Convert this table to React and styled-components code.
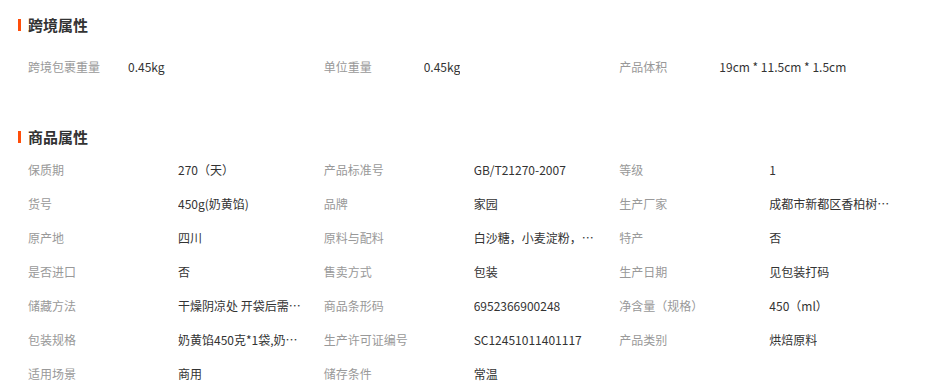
import React from "react";
import styled, { createGlobalStyle } from "styled-components";

const GlobalStyle = createGlobalStyle`
  body {
    margin: 0;
    background: #fff;
    font-family: "Noto Sans CJK SC", "Liberation Sans", sans-serif;
  }
`;

const Page = styled.div`
  padding: 15px 28px 0;
`;

const SectionTitle = styled.h3`
  position: relative;
  margin: ${({ $top }) => $top || 0}px 0 0;
  height: 20px;
  line-height: 20px;
  font-size: 15px;
  font-weight: bold;
  color: #333;
  &::before {
    position: absolute;
    content: "";
    left: -10px;
    top: 4px;
    width: 3px;
    height: 12px;
    background: #ff4e0a;
  }
`;

const AttrGrid = styled.div`
  display: grid;
  grid-template-columns: repeat(3, 1fr);
  margin-top: ${({ $top }) => $top}px;
`;

const AttrItem = styled.div`
  display: flex;
  align-items: center;
  height: 34px;
  font-size: 12px;
  line-height: 16px;
  min-width: 0;
`;

const AttrLabel = styled.span`
  flex: 0 0 ${({ $width }) => $width}px;
  color: #999;
  white-space: nowrap;
`;

const AttrValue = styled.span`
  max-width: ${({ $max }) => ($max ? `${$max}px` : "none")};
  color: #333;
  white-space: nowrap;
  overflow: hidden;
  text-overflow: ellipsis;
`;

const crossBorder = [
  ["跨境包裹重量", "0.45kg"],
  ["单位重量", "0.45kg"],
  ["产品体积", "19cm * 11.5cm * 1.5cm"],
];

const productAttrs = [
  ["保质期", "270（天）"],
  ["产品标准号", "GB/T21270-2007"],
  ["等级", "1"],
  ["货号", "450g(奶黄馅)"],
  ["品牌", "家园"],
  ["生产厂家", "成都市新都区香柏树食品有限公司"],
  ["原产地", "四川"],
  ["原料与配料", "白沙糖，小麦淀粉，奶粉，黄油"],
  ["特产", "否"],
  ["是否进口", "否"],
  ["售卖方式", "包装"],
  ["生产日期", "见包装打码"],
  ["储藏方法", "干燥阴凉处 开袋后需冷藏保存"],
  ["商品条形码", "6952366900248"],
  ["净含量（规格）", "450（ml）"],
  ["包装规格", "奶黄馅450克*1袋,奶黄馅"],
  ["生产许可证编号", "SC12451011401117"],
  ["产品类别", "烘焙原料"],
  ["适用场景", "商用"],
  ["储存条件", "常温"],
];

function AttrList({ items, labelWidth, valueMax, top }) {
  return (
    <AttrGrid $top={top}>
      {items.map(([label, value], index) => (
        <AttrItem key={index}>
          <AttrLabel $width={labelWidth}>{label}</AttrLabel>
          <AttrValue $max={valueMax} title={value}>
            {value}
          </AttrValue>
        </AttrItem>
      ))}
    </AttrGrid>
  );
}

export default function App() {
  return (
    <>
      <GlobalStyle />
      <Page>
        <SectionTitle>跨境属性</SectionTitle>
        <AttrList items={crossBorder} labelWidth={100} top={15} />
        <SectionTitle $top={43}>商品属性</SectionTitle>
        <AttrList items={productAttrs} labelWidth={150} valueMax={128} top={6} />
      </Page>
    </>
  );
}
